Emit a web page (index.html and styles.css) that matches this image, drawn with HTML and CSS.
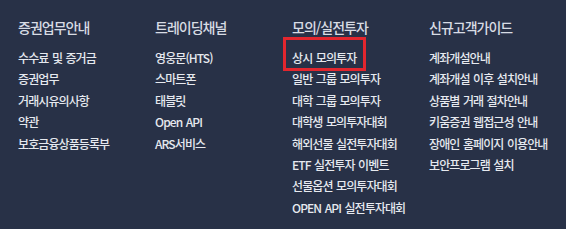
FILE: index.html
```html
<!DOCTYPE html>
<html lang="ko">
<head>
  <meta charset="UTF-8">
  <meta name="viewport" content="width=device-width, initial-scale=1.0">
  <title>사이트맵</title>
  <link rel="stylesheet" href="styles.css">
</head>
<body>
  <div class="sitemap">
    <div class="col">
      <h2>증권업무안내</h2>
      <ul>
        <li><a href="#">수수료 및 증거금</a></li>
        <li><a href="#">증권업무</a></li>
        <li><a href="#">거래시유의사항</a></li>
        <li><a href="#">약관</a></li>
        <li><a href="#">보호금융상품등록부</a></li>
      </ul>
    </div>
    <div class="col">
      <h2>트레이딩채널</h2>
      <ul>
        <li><a href="#">영웅문(HTS)</a></li>
        <li><a href="#">스마트폰</a></li>
        <li><a href="#">태블릿</a></li>
        <li><a href="#">Open API</a></li>
        <li><a href="#">ARS서비스</a></li>
      </ul>
    </div>
    <div class="col">
      <h2>모의/실전투자</h2>
      <ul>
        <li class="marked"><a href="#">상시 모의투자</a></li>
        <li><a href="#">일반 그룹 모의투자</a></li>
        <li><a href="#">대학 그룹 모의투자</a></li>
        <li><a href="#">대학생 모의투자대회</a></li>
        <li><a href="#">해외선물 실전투자대회</a></li>
        <li><a href="#">ETF 실전투자 이벤트</a></li>
        <li><a href="#">선물옵션 모의투자대회</a></li>
        <li><a href="#">OPEN API 실전투자대회</a></li>
      </ul>
    </div>
    <div class="col">
      <h2>신규고객가이드</h2>
      <ul>
        <li><a href="#">계좌개설안내</a></li>
        <li><a href="#">계좌개설 이후 설치안내</a></li>
        <li><a href="#">상품별 거래 절차안내</a></li>
        <li><a href="#">키움증권 웹접근성 안내</a></li>
        <li><a href="#">장애인 홈페이지 이용안내</a></li>
        <li><a href="#">보안프로그램 설치</a></li>
      </ul>
    </div>
  </div>
</body>
</html>
```

FILE: styles.css
```css
html, body {
  margin: 0;
  padding: 0;
  background-color: #283147;
  font-family: "Noto Sans CJK KR", "Noto Sans", sans-serif;
}

.sitemap {
  display: flex;
  padding: 17px 0 0 18px;
  height: 212px;
}

.col {
  width: 140px;
}

.col h2 {
  margin: 0 0 9px;
  font-size: 14px;
  font-weight: 500;
  line-height: 20px;
  letter-spacing: -1px;
  color: #d8dce4;
}

.col ul {
  list-style: none;
  margin: 0;
  padding: 0;
}

.col li {
  height: 21.4px;
  line-height: 21.4px;
}

.col li a {
  font-size: 12px;
  font-weight: 500;
  color: #e6e9ef;
  text-decoration: none;
  letter-spacing: -0.9px;
  word-spacing: 1px;
}

.col li.marked {
  position: relative;
}

.col li.marked::before {
  content: "";
  position: absolute;
  left: -9px;
  top: -9px;
  width: 83px;
  height: 34px;
  border: 3px solid #e3262e;
  box-sizing: border-box;
}
```
